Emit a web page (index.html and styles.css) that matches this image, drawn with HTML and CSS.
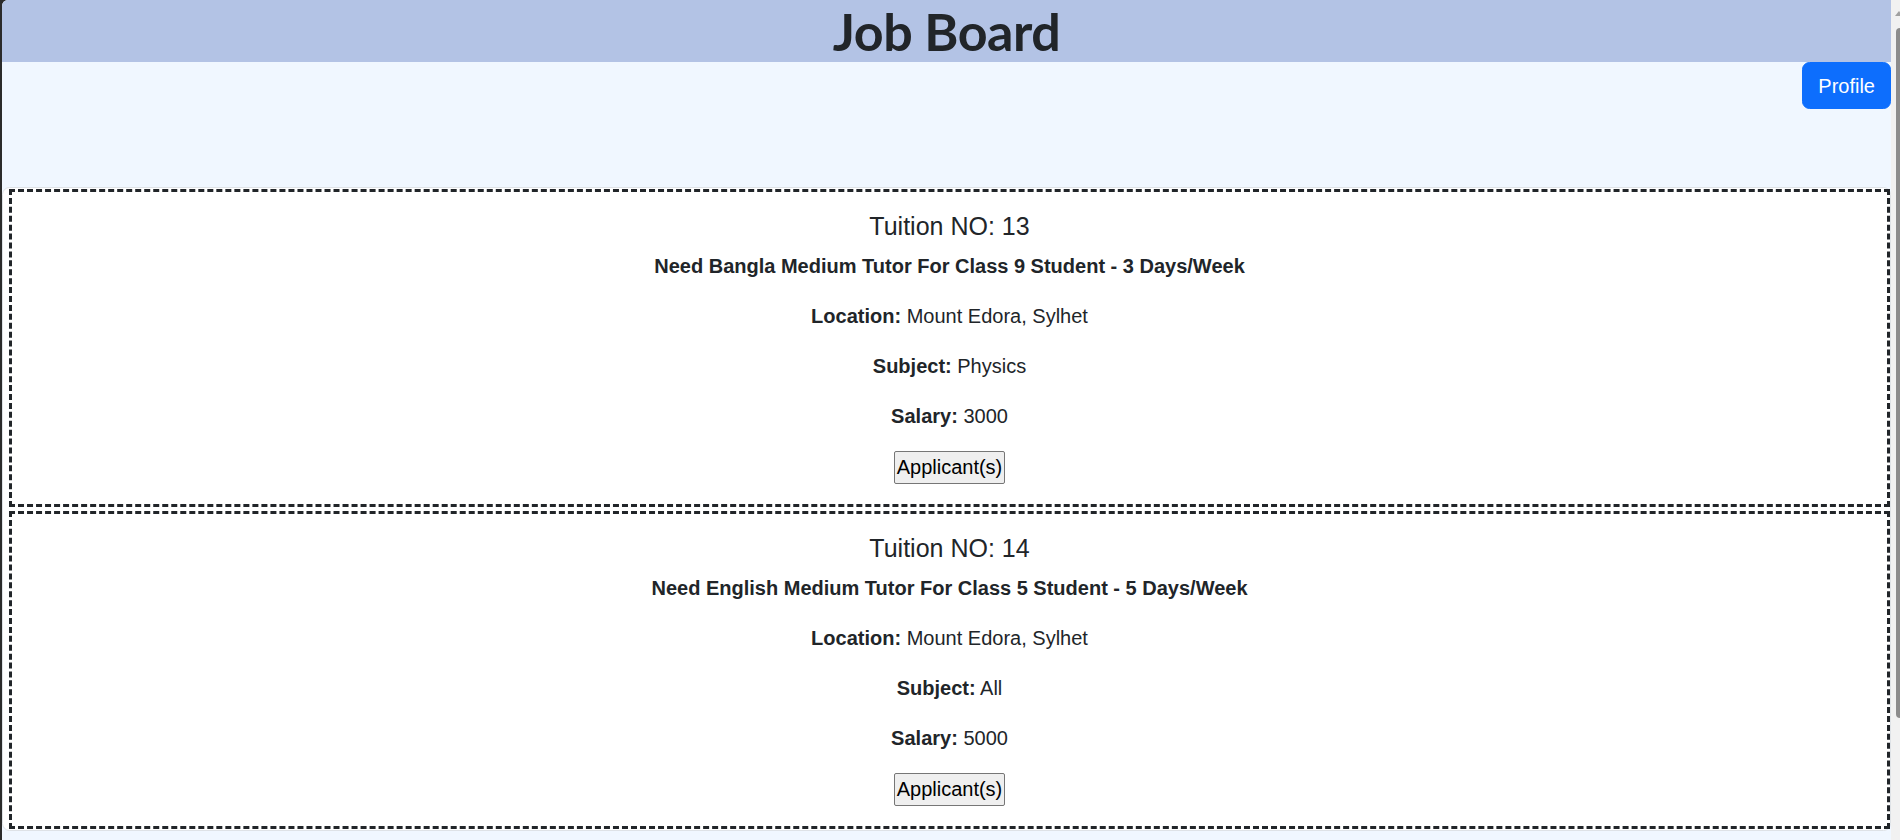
FILE: index.html
```html
<!DOCTYPE html>
<html lang="en">
<head>
<meta charset="utf-8">
<title>Job Board</title>
<link rel="stylesheet" href="styles.css">
</head>
<body>
<div class="window">
  <div class="app">
    <header class="topbar">
      <h1 class="title">Job Board</h1>
    </header>
    <div class="actions">
      <button class="btn-profile" type="button">Profile</button>
    </div>
    <section class="jobs">
      <article class="job">
        <h5 class="job-no">Tuition NO: 13</h5>
        <p class="job-title">Need Bangla Medium Tutor For Class 9 Student - 3 Days/Week</p>
        <p><b>Location:</b> Mount Edora, Sylhet</p>
        <p><b>Subject:</b> Physics</p>
        <p><b>Salary:</b> 3000</p>
        <button class="btn-applicants" type="button">Applicant(s)</button>
      </article>
      <article class="job">
        <h5 class="job-no">Tuition NO: 14</h5>
        <p class="job-title">Need English Medium Tutor For Class 5 Student - 5 Days/Week</p>
        <p><b>Location:</b> Mount Edora, Sylhet</p>
        <p><b>Subject:</b> All</p>
        <p><b>Salary:</b> 5000</p>
        <button class="btn-applicants" type="button">Applicant(s)</button>
      </article>
    </section>
  </div>
  <div class="scrollbar">
    <span class="arrow"></span>
    <span class="thumb"></span>
  </div>
</div>
</body>
</html>
```

FILE: styles.css
```css
html, body {
  margin: 0;
  height: 100%;
}

body {
  background: #2b2b2b;
  font-family: "Liberation Sans", Arial, sans-serif;
  color: #212529;
  overflow: hidden;
}

.window {
  display: flex;
  height: 840px;
  padding-left: 2px;
}

.app {
  flex: 1;
  min-width: 0;
  background: #f0f7ff;
  border-top-left-radius: 6px;
  overflow: hidden;
}

.topbar {
  height: 62px;
  background: #b3c3e5;
  text-align: center;
}

.title {
  margin: 0;
  font-family: Lato, "Open Sans", sans-serif;
  font-weight: 700;
  font-size: 52px;
  letter-spacing: -0.5px;
  line-height: 62px;
  color: #212529;
}

.actions {
  display: flex;
  justify-content: flex-end;
  align-items: flex-start;
  height: 125px;
}

.btn-profile {
  font-family: "Liberation Sans", Arial, sans-serif;
  font-size: 20px;
  line-height: 30px;
  color: #fff;
  background: #0d6efd;
  border: 1px solid #0d6efd;
  border-radius: 7.5px;
  padding: 7.5px 15px;
  cursor: pointer;
}

.jobs {
  background: #fff;
  border: 1px solid #dee2e6;
  border-radius: 7.5px;
  padding: 1px 0 1px 6px;
  display: flex;
  flex-direction: column;
  gap: 4px;
}

.job {
  border: 3px dashed #212529;
  padding: 19px 19px 20px;
  text-align: center;
}

.job-no {
  margin: 0 0 10px;
  font-size: 25px;
  line-height: 30px;
  font-weight: 400;
}

.job p {
  margin: 0 0 20px;
  font-size: 20px;
  line-height: 30px;
}

.job .job-title {
  font-weight: 700;
}

.btn-applicants {
  font-family: "Liberation Sans", Arial, sans-serif;
  font-size: 20px;
  height: 33px;
  padding: 0 2px;
  color: #000;
  background: #efefef;
  border: 1px solid #767676;
  border-radius: 2px;
}

.scrollbar {
  width: 9px;
  background: #f1f1f1;
  display: flex;
  flex-direction: column;
  align-items: flex-start;
}

.arrow {
  width: 0;
  height: 0;
  border-left: 4px solid transparent;
  border-right: 4px solid transparent;
  border-bottom: 5px solid #a0a0a0;
  margin: 11px 0 0 4px;
}

.thumb {
  width: 4px;
  height: 690px;
  margin: 12px 0 0 5px;
  background: #8c8c8c;
  border-radius: 4px 0 0 4px;
}
```
